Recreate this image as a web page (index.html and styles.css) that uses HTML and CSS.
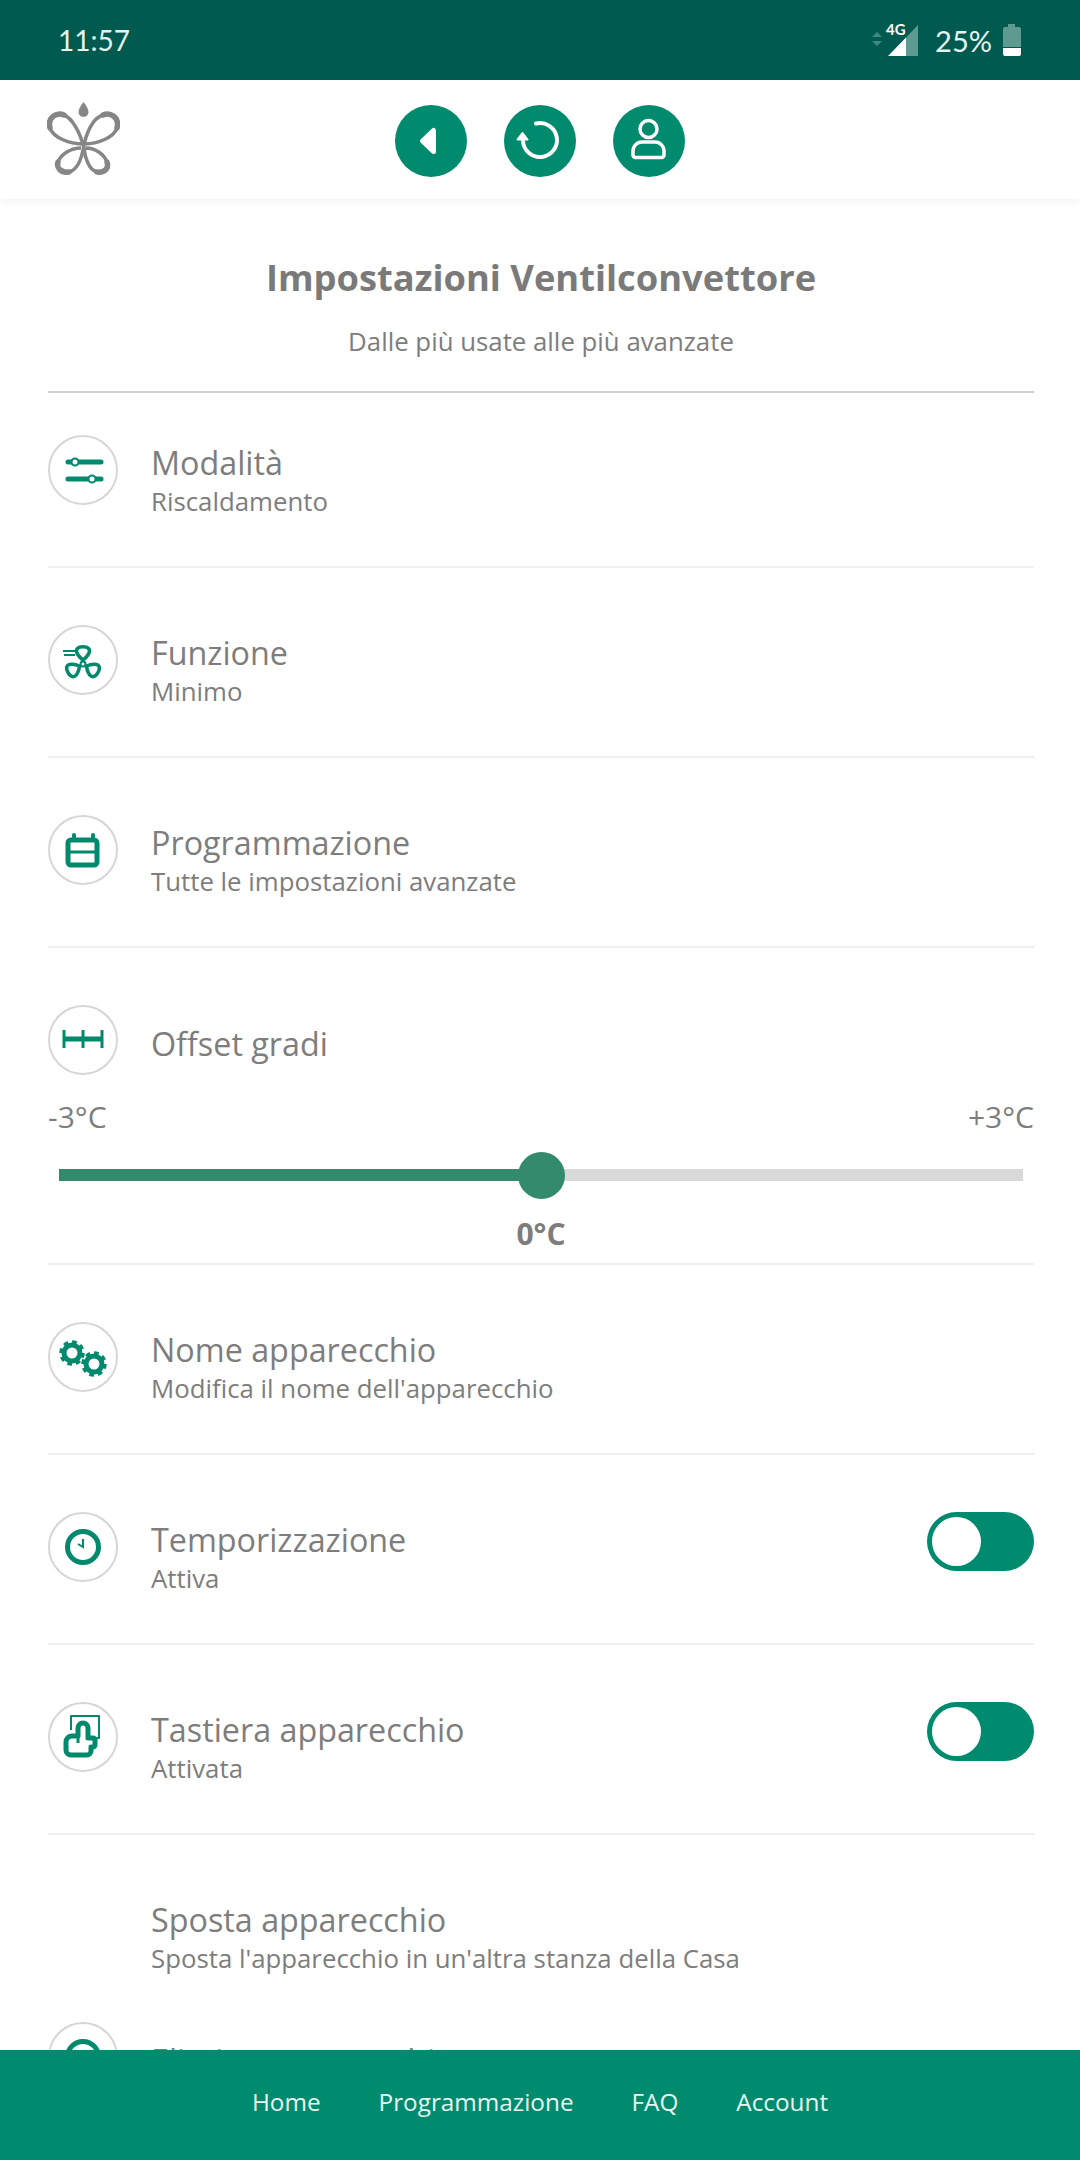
FILE: index.html
```html
<!DOCTYPE html>
<html lang="it">

<head>
    <meta charset="UTF-8">
    <meta name="viewport" content="width=device-width, initial-scale=1.0">
    <title>Impostazioni Ventilconvettore</title>
    <link rel="stylesheet" href="styles.css">
</head>

<body>
    <div class="statusBar">
        <span class="clock">11:57</span>
        <div class="statusRight">
            <svg class="signal" width="52" height="40" viewBox="0 -4 52 40">
                <path d="M5 13l5-5 5 5zM5 17h10l-5 5z" fill="#3f8a7e" />
                <path d="M51 1v31H39V13.400z" fill="#5f9a90" />
                <path d="M39 13.400V32H21z" fill="#fff" />
                <text x="19" y="11" class="fourG">4G</text>
            </svg>
            <span class="battPct">25%</span>
            <svg width="18" height="32" viewBox="0 0 18 32">
                <path d="M5 0h7v3h4a2 2 0 0 1 2 2v18H0V5a2 2 0 0 1 2-2h3z" fill="#5f9a90" />
                <path d="M0 24h18v6a2 2 0 0 1-2 2H2a2 2 0 0 1-2-2z" fill="#fff" />
            </svg>
        </div>
    </div>

    <header class="topBar">
        <svg class="logo" width="73" height="73" viewBox="0 0 73 73" fill="none" stroke="#868686" stroke-width="3.500">
            <path d="M36.500 0c3 4 5 7 5 10a5 5 0 0 1-10 0c0-3 2-6 5-10z" fill="#868686" stroke="none" />
            <path d="M35 42C24 42 6 36 3 26C0 15 10 10 17 13C25 16 33 30 37 46C38 56 42 68 50 70C58 71 62 66 60 60C57 52 48 46 39 46" />
            <path d="M38 42C49 42 67 36 70 26C73 15 63 10 56 13C46 16 39 30 36 48C34 58 30 68 22 70C14 71 9 66 11 60C14 52 24 46 34 46" />
            <path d="M3 26C0 15 10 10 17 13M70 26C73 15 63 10 56 13M22 70C14 71 9 66 11 60M50 70C58 71 62 66 60 60" stroke-width="5.500" stroke-linecap="round" />
        </svg>
        <div class="topBtns">
            <div class="roundBtn">
                <svg width="72" height="72" viewBox="0 0 72 72">
                    <path d="M38.500 25.500v21L27.500 36z" fill="#fff" stroke="#fff" stroke-width="5" stroke-linejoin="round" />
                </svg>
            </div>
            <div class="roundBtn">
                <svg width="72" height="72" viewBox="0 0 72 72" fill="none" stroke="#fff">
                    <path d="M32 18.500A17 17 0 1 1 19 36" stroke-width="4" stroke-linecap="round" />
                    <path d="M18.500 28l-5 6.500h10z" fill="#fff" stroke-width="2" stroke-linejoin="round" />
                </svg>
            </div>
            <div class="roundBtn">
                <svg width="72" height="72" viewBox="0 0 72 72" fill="none" stroke="#fff" stroke-width="3.500">
                    <circle cx="35.500" cy="24" r="8.500" />
                    <path d="M29 37h13a9 9 0 0 1 9 9v4a2.500 2.500 0 0 1-2.500 2.500h-26A2.500 2.500 0 0 1 20 50v-4a9 9 0 0 1 9-9z" />
                </svg>
            </div>
        </div>
    </header>

    <main class="content">
        <div class="heading">
            <h1>Impostazioni Ventilconvettore</h1>
            <p>Dalle più usate alle più avanzate</p>
        </div>

        <div class="row firstRow">
            <div class="iconCircle">
                <svg width="70" height="70" viewBox="0 0 70 70" fill="none" stroke="#00896c" stroke-linecap="round">
                    <path d="M20 27h33M20 44h33" stroke-width="5" />
                    <circle cx="27" cy="27" r="3.500" fill="#fff" stroke-width="2" />
                    <circle cx="44" cy="44" r="3.500" fill="#fff" stroke-width="2" />
                </svg>
            </div>
            <div class="rowText">
                <div class="rowTitle">Modalità</div>
                <div class="rowSub">Riscaldamento</div>
            </div>
        </div>

        <div class="row">
            <div class="iconCircle">
                <svg width="70" height="70" viewBox="0 0 70 70" fill="none" stroke="#00896c" stroke-width="3.500" stroke-linejoin="round">
                    <path id="blade" d="M35 35C31 32 27 27 29 24C31 21 39 21 41 24C43 27 39 32 35 35z" />
                    <use href="#blade" transform="rotate(120 35 39)" />
                    <use href="#blade" transform="rotate(240 35 39)" />
                    <circle cx="35" cy="39" r="2.500" stroke-width="2" />
                    <path d="M15 26h13M16 30h11" stroke-width="2" />
                </svg>
            </div>
            <div class="rowText">
                <div class="rowTitle">Funzione</div>
                <div class="rowSub">Minimo</div>
            </div>
        </div>

        <div class="row">
            <div class="iconCircle">
                <svg width="70" height="70" viewBox="0 0 70 70" fill="none" stroke="#00896c" stroke-linecap="round">
                    <rect x="20" y="25" width="29" height="25" rx="3" stroke-width="5" />
                    <path d="M22 37h26" stroke-width="3" />
                    <path d="M26 20v4M45 20v4" stroke-width="4" />
                </svg>
            </div>
            <div class="rowText">
                <div class="rowTitle">Programmazione</div>
                <div class="rowSub">Tutte le impostazioni avanzate</div>
            </div>
        </div>

        <div class="row sliderRow">
            <div class="sliderHead">
                <div class="iconCircle">
                    <svg width="70" height="70" viewBox="0 0 70 70" fill="none" stroke="#00896c">
                        <path d="M16 34h38" stroke-width="5" />
                        <path d="M16 25v18M35 25v18M54 25v18" stroke-width="3" />
                    </svg>
                </div>
                <div class="rowText">
                    <div class="rowTitle">Offset gradi</div>
                </div>
            </div>
            <div class="sliderLabels">
                <span>-3°C</span>
                <span>+3°C</span>
            </div>
            <div class="track">
                <div class="trackFill"></div>
                <div class="thumb"></div>
            </div>
            <div class="sliderValue">0°C</div>
        </div>

        <div class="row">
            <div class="iconCircle">
                <svg width="70" height="70" viewBox="0 0 70 70" fill="none" stroke="#00896c">
                    <circle cx="24" cy="31" r="8" stroke-width="5" />
                    <circle cx="24" cy="31" r="11" stroke-width="3.500" stroke-dasharray="4.600 4" />
                    <circle cx="46" cy="42" r="8" stroke-width="5" />
                    <circle cx="46" cy="42" r="11" stroke-width="3.500" stroke-dasharray="4.600 4" />
                </svg>
            </div>
            <div class="rowText">
                <div class="rowTitle">Nome apparecchio</div>
                <div class="rowSub">Modifica il nome dell'apparecchio</div>
            </div>
        </div>

        <div class="row">
            <div class="iconCircle">
                <svg width="70" height="70" viewBox="0 0 70 70" fill="none" stroke="#00896c">
                    <circle cx="35" cy="35" r="15.500" stroke-width="5" />
                    <path d="M35 27v8l-5-3" stroke-width="2" />
                </svg>
            </div>
            <div class="rowText">
                <div class="rowTitle">Temporizzazione</div>
                <div class="rowSub">Attiva</div>
            </div>
            <div class="toggle"><div class="knob"></div></div>
        </div>

        <div class="row">
            <div class="iconCircle">
                <svg width="70" height="70" viewBox="0 0 70 70" fill="none" stroke="#00896c" stroke-linejoin="round">
                    <path d="M23 28V14h28v22h-5" stroke-width="2" />
                    <path d="M30 34V26a5 5 0 0 1 10 0v10h5a2 2 0 0 1 2 2v5a2 2 0 0 1-2 2h-2v4a4 4 0 0 1-4 4H23a5 5 0 0 1-5-5v-8a6 6 0 0 1 6-6z" stroke-width="5" />
                    <path d="M30 34v7" stroke-width="3" />
                </svg>
            </div>
            <div class="rowText">
                <div class="rowTitle">Tastiera apparecchio</div>
                <div class="rowSub">Attivata</div>
            </div>
            <div class="toggle"><div class="knob"></div></div>
        </div>

        <div class="row plainRow">
            <div class="iconBlank"></div>
            <div class="rowText">
                <div class="rowTitle">Sposta apparecchio</div>
                <div class="rowSub">Sposta l'apparecchio in un'altra stanza della Casa</div>
            </div>
        </div>

        <div class="row lastRow">
            <div class="iconCircle">
                <svg width="70" height="70" viewBox="0 0 70 70" fill="none" stroke="#00896c">
                    <circle cx="35" cy="35" r="15.500" stroke-width="5" />
                </svg>
            </div>
            <div class="rowText">
                <div class="rowTitle">Elimina apparecchio</div>
            </div>
        </div>
    </main>

    <footer class="bottomNav">
        <a>Home</a>
        <a>Programmazione</a>
        <a>FAQ</a>
        <a>Account</a>
    </footer>
</body>

</html>
```

FILE: styles.css
```css
* {
    box-sizing: border-box;
    margin: 0;
}

body {
    width: 1080px;
    height: 2160px;
    display: flex;
    flex-direction: column;
    overflow: hidden;
    background: #fff;
    font-family: "Open Sans", sans-serif;
    color: #7d7d7d;
}

.statusBar {
    height: 80px;
    flex: none;
    display: flex;
    align-items: center;
    justify-content: space-between;
    padding: 0 59px 0 58px;
    background: #005a4f;
    color: #e6f3f0;
    font-family: Lato, sans-serif;
    font-size: 29px;
}

.clock {
    font-size: 28px;
}

.statusRight {
    display: flex;
    align-items: center;
}

.signal {
    margin-right: 16px;
}

.fourG {
    font-size: 15px;
    font-weight: 700;
    fill: #fff;
}

.battPct {
    margin-right: 11px;
}

.topBar {
    height: 119px;
    flex: none;
    display: flex;
    align-items: center;
    justify-content: center;
    position: relative;
    padding-top: 3px;
    background: #fff;
    box-shadow: 0 3px 8px rgba(0, 0, 0, 0.05);
}

.logo {
    position: absolute;
    left: 47px;
    top: 22px;
}

.topBtns {
    display: flex;
    gap: 37px;
}

.roundBtn {
    width: 72px;
    height: 72px;
    border-radius: 50%;
    background: #008a6e;
}

.roundBtn svg {
    display: block;
}

.content {
    flex: 1;
    min-height: 0;
    overflow: hidden;
    padding: 0 46px 0 48px;
}

.heading {
    padding-top: 54px;
    height: 194px;
    border-bottom: 2px solid #cfcfcf;
    text-align: center;
}

.heading h1 {
    font-size: 36.300px;
    line-height: 48px;
    font-weight: 700;
    color: #7a7a7a;
}

.heading p {
    margin-top: 23px;
    font-size: 25.800px;
    line-height: 34px;
}

.row {
    height: 190px;
    display: flex;
    align-items: flex-start;
    padding-top: 57px;
    border-bottom: 2px solid #f0f0f0;
}

.firstRow {
    height: 175px;
    padding-top: 42px;
}

.sliderRow {
    height: 317px;
    display: block;
    padding-top: 57px;
}

.plainRow {
    height: 187px;
    border-bottom: none;
}

.lastRow {
    height: 70px;
    align-items: center;
    padding-top: 0;
    border-bottom: none;
}

.iconCircle {
    width: 70px;
    height: 70px;
    flex: none;
    border: 2px solid #d6d6d6;
    border-radius: 50%;
}

.iconCircle svg {
    display: block;
    margin: -2px;
}

.iconBlank {
    width: 70px;
    height: 70px;
    flex: none;
}

.rowText {
    flex: 1;
    margin-left: 33px;
}

.rowTitle {
    font-size: 32.300px;
    line-height: 44px;
    margin-top: 5px;
}

.rowSub {
    font-size: 25.800px;
    line-height: 34px;
}

.toggle {
    width: 107px;
    height: 59px;
    flex: none;
    padding: 5px;
    border-radius: 30px;
    background: #008a6e;
}

.knob {
    width: 49px;
    height: 49px;
    border-radius: 50%;
    background: #fff;
}

.sliderHead {
    display: flex;
    align-items: center;
}

.sliderLabels {
    display: flex;
    justify-content: space-between;
    margin-top: 22px;
    font-size: 30px;
    line-height: 40px;
}

.track {
    position: relative;
    height: 12px;
    margin: 32px 11px 0;
    background: #d9d9d9;
}

.trackFill {
    width: 50%;
    height: 100%;
    background: #348a6c;
}

.thumb {
    position: absolute;
    left: 50%;
    top: 50%;
    width: 47px;
    height: 47px;
    margin: -23.500px 0 0 -23.500px;
    border-radius: 50%;
    background: #348a6c;
}

.sliderValue {
    margin-top: 33px;
    text-align: center;
    font-size: 30px;
    line-height: 40px;
    font-weight: 700;
}

.bottomNav {
    height: 110px;
    flex: none;
    display: flex;
    align-items: center;
    justify-content: center;
    gap: 58px;
    padding-bottom: 8px;
    background: #008a6e;
    color: #e8f6f2;
    font-size: 24.300px;
}
```
